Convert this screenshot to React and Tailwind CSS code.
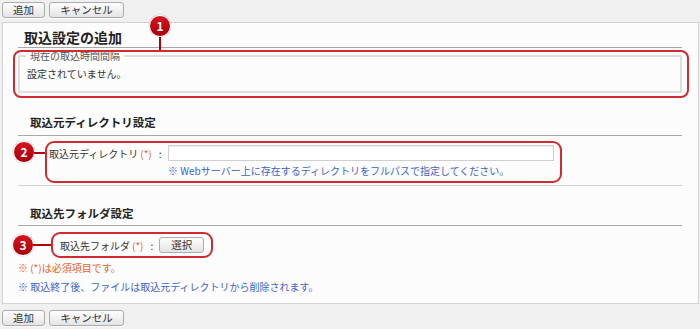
import React from 'react';

const Btn = ({ children, className = '' }) => (
  <button
    type="button"
    className={`h-[16px] rounded-[3px] border border-[#acacac] bg-gradient-to-b from-[#fefefe] to-[#e4e4e4] text-[10.5px] leading-[14px] text-[#333] shadow-[0_1px_0_rgba(255,255,255,0.8)] ${className}`}
  >
    {children}
  </button>
);

const ButtonBar = () => (
  <div className="flex gap-[4px] pl-[2px]">
    <Btn className="w-[43px]">追加</Btn>
    <Btn className="w-[75px]">キャンセル</Btn>
  </div>
);

// red numbered marker used for the annotations
const Marker = ({ n, className = '' }) => (
  <div
    className={`absolute w-[22px] h-[22px] rounded-full bg-gradient-to-b from-[#d8141e] to-[#a8000a] border border-white shadow-[0_0_1px_rgba(0,0,0,0.5)] flex items-center justify-center text-white text-[12px] font-bold leading-none ${className}`}
  >
    {n}
  </div>
);

const Req = () => <span className="ml-[2px] text-[#e9622e]">(*)</span>;

export default function App() {
  return (
    <div className="w-[700px] h-[329px] overflow-hidden bg-[#f0f0f0] pt-[2px] font-['Noto_Sans_CJK_JP',sans-serif] text-[#333]">
      <ButtonBar />

      {/* Panel */}
      <div className="ml-[2px] mt-[4px] w-[697px] border border-[#d2d2d2] bg-[#fcfcfc] pl-[15px] pr-[16px] pb-[8px]">
        <h2 className="pt-[4px] pl-[6px] text-[14px] leading-[20px] font-bold text-[#222] border-b border-[#a8a8a8]">
          取込設定の追加
        </h2>

        {/* Current interval */}
        <div className="relative mt-[2px]">
          <div className="absolute -left-[5px] top-0 -right-[7px] -bottom-[5px] rounded-[8px] border-2 border-[#cf2b30]" />
          <div className="absolute left-[141px] -top-[14px] w-[2px] h-[14px] bg-[#b0000c]" />
          <Marker n="1" className="left-[131px] -top-[35px]" />
          <fieldset className="border-2 border-[#dedede]">
            <legend className="ml-[6px] px-[4px] text-[10px] leading-[12px] text-[#555]">現在の取込時間間隔</legend>
            <div className="pl-[7px] pt-[4px] pb-[9px] text-[10px] leading-[16px]">設定されていません。</div>
          </fieldset>
        </div>

        {/* Source directory */}
        <h3 className="mt-[21px] pl-[12px] pb-[5px] text-[11.5px] leading-[16px] font-bold text-[#222] border-b border-[#a8a8a8]">
          取込元ディレクトリ設定
        </h3>
        <div className="relative ml-[27px] mt-[5px] w-[517px] rounded-[9px] border-2 border-[#cf2b30] pl-[2px] pt-[2px] pb-[3px]">
          <Marker n="2" className="-left-[34px] -top-[2px]" />
          <div className="absolute -left-[13px] top-[9px] w-[11px] h-[1.5px] bg-[#b0000c]" />
          <div className="flex items-center h-[16px] text-[10px]">
            <div className="w-[119px] flex items-center">
              <span>取込元ディレクトリ</span>
              <Req />
              <span className="ml-[7px]">:</span>
            </div>
            <input
              type="text"
              className="w-[386px] h-[16px] border border-[#cfcfcf] bg-white shadow-[inset_0_1px_1px_rgba(0,0,0,0.08)] outline-none"
            />
          </div>
          <div className="mt-[3px] ml-[119px] text-[10px] leading-[14px] text-[#3d63c9]">
            ※ Webサーバー上に存在するディレクトリをフルパスで指定してください。
          </div>
        </div>
        <div className="mt-[2px] border-t border-[#d4d4d4]" />

        {/* Destination folder */}
        <h3 className="mt-[19px] pl-[12px] pb-[4px] text-[11.5px] leading-[16px] font-bold text-[#222] border-b border-[#a8a8a8]">
          取込先フォルダ設定
        </h3>
        <div className="relative ml-[33px] mt-[6px] w-[162px] h-[26px] rounded-[9px] border-2 border-[#cf2b30] pl-[7px] flex items-center text-[10px]">
          <Marker n="3" className="-left-[41px] top-0" />
          <div className="absolute -left-[20px] top-[10px] w-[18px] h-[1.5px] bg-[#b0000c]" />
          <span>取込先フォルダ</span>
          <Req />
          <span className="ml-[7px]">:</span>
          <Btn className="ml-[6px] w-[45px] h-[15px]">選択</Btn>
        </div>

        <p className="mt-[2px] text-[10px] leading-[16px] text-[#e9622e]">※ (*)は必須項目です。</p>
        <p className="mt-[3px] text-[10px] leading-[16px] text-[#3d63c9]">
          ※ 取込終了後、ファイルは取込元ディレクトリから削除されます。
        </p>
      </div>

      <div className="mt-[6px]">
        <ButtonBar />
      </div>
    </div>
  );
}
